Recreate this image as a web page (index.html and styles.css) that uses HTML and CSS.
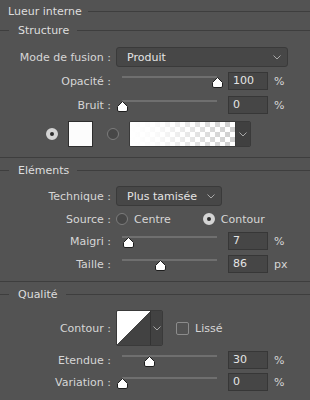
FILE: index.html
```html
<!DOCTYPE html>
<html lang="fr">
<head>
    <meta charset="UTF-8">
    <title>Lueur interne</title>
    <link rel="stylesheet" href="styles.css">
</head>
<body>
    <div class="panel">
        <!-- Title -->
        <div class="title">
            <span>Lueur interne</span>
            <i class="rule"></i>
        </div>

        <!-- Structure -->
        <section class="group first">
            <div class="legend"><i class="rule lead"></i><span>Structure</span><i class="rule"></i></div>

            <div class="row r-mode">
                <label class="lbl">Mode de fusion :</label>
                <div class="select wide">
                    <span>Produit</span>
                    <svg class="chev" width="8" height="5" viewBox="0 0 8 5"><path d="M0.5 0.5 L4 4 L7.5 0.5" fill="none" stroke="#a8a8a8" stroke-width="1"/></svg>
                </div>
            </div>

            <div class="row r-slider g5">
                <label class="lbl">Opacité :</label>
                <div class="slider">
                    <div class="track"></div>
                    <svg class="thumb" style="left: 101px" width="11" height="11" viewBox="0 0 11 11"><path d="M5.5 0.5 L10.5 5.5 L10.5 9 Q10.5 10.5 9 10.5 L2 10.5 Q0.5 10.5 0.5 9 L0.5 5.5 Z" fill="#fff" stroke="#1e1e1e"/></svg>
                </div>
                <div class="num">100</div>
                <span class="unit">%</span>
            </div>

            <div class="row r-slider g6">
                <label class="lbl">Bruit :</label>
                <div class="slider">
                    <div class="track"></div>
                    <svg class="thumb" style="left: 6px" width="11" height="11" viewBox="0 0 11 11"><path d="M5.5 0.5 L10.5 5.5 L10.5 9 Q10.5 10.5 9 10.5 L2 10.5 Q0.5 10.5 0.5 9 L0.5 5.5 Z" fill="#fff" stroke="#1e1e1e"/></svg>
                </div>
                <div class="num">0</div>
                <span class="unit">%</span>
            </div>

            <div class="row r-color">
                <span class="radio on"></span>
                <div class="swatch"></div>
                <span class="radio"></span>
                <div class="gradient">
                    <div class="grad-fill"></div>
                    <div class="grad-btn">
                        <svg width="8" height="5" viewBox="0 0 8 5"><path d="M0.5 0.5 L4 4 L7.5 0.5" fill="none" stroke="#a8a8a8" stroke-width="1"/></svg>
                    </div>
                </div>
            </div>
        </section>

        <!-- Eléments -->
        <section class="group second">
            <div class="legend"><i class="rule lead"></i><span>Eléments</span><i class="rule"></i></div>

            <div class="row r-tech">
                <label class="lbl">Technique :</label>
                <div class="select">
                    <span>Plus tamisée</span>
                    <svg class="chev" width="8" height="5" viewBox="0 0 8 5"><path d="M0.5 0.5 L4 4 L7.5 0.5" fill="none" stroke="#a8a8a8" stroke-width="1"/></svg>
                </div>
            </div>

            <div class="row r-source">
                <label class="lbl">Source :</label>
                <span class="radio"></span>
                <span class="opt">Centre</span>
                <span class="radio on spaced"></span>
                <span class="opt">Contour</span>
            </div>

            <div class="row r-slider g4">
                <label class="lbl">Maigri :</label>
                <div class="slider">
                    <div class="track"></div>
                    <svg class="thumb" style="left: 12px" width="11" height="11" viewBox="0 0 11 11"><path d="M5.5 0.5 L10.5 5.5 L10.5 9 Q10.5 10.5 9 10.5 L2 10.5 Q0.5 10.5 0.5 9 L0.5 5.5 Z" fill="#fff" stroke="#1e1e1e"/></svg>
                </div>
                <div class="num">7</div>
                <span class="unit">%</span>
            </div>

            <div class="row r-slider g5">
                <label class="lbl">Taille :</label>
                <div class="slider">
                    <div class="track"></div>
                    <svg class="thumb" style="left: 44px" width="11" height="11" viewBox="0 0 11 11"><path d="M5.5 0.5 L10.5 5.5 L10.5 9 Q10.5 10.5 9 10.5 L2 10.5 Q0.5 10.5 0.5 9 L0.5 5.5 Z" fill="#fff" stroke="#1e1e1e"/></svg>
                </div>
                <div class="num">86</div>
                <span class="unit">px</span>
            </div>
        </section>

        <!-- Qualité -->
        <section class="group third">
            <div class="legend"><i class="rule lead"></i><span>Qualité</span><i class="rule"></i></div>

            <div class="row r-contour">
                <label class="lbl">Contour :</label>
                <div class="curve">
                    <div class="curve-fill"></div>
                    <div class="curve-btn">
                        <svg width="8" height="5" viewBox="0 0 8 5"><path d="M0.5 0.5 L4 4 L7.5 0.5" fill="none" stroke="#a8a8a8" stroke-width="1"/></svg>
                    </div>
                </div>
                <span class="check"></span>
                <span class="opt">Lissé</span>
            </div>

            <div class="row r-slider g5">
                <label class="lbl">Etendue :</label>
                <div class="slider">
                    <div class="track"></div>
                    <svg class="thumb" style="left: 33px" width="11" height="11" viewBox="0 0 11 11"><path d="M5.5 0.5 L10.5 5.5 L10.5 9 Q10.5 10.5 9 10.5 L2 10.5 Q0.5 10.5 0.5 9 L0.5 5.5 Z" fill="#fff" stroke="#1e1e1e"/></svg>
                </div>
                <div class="num">30</div>
                <span class="unit">%</span>
            </div>

            <div class="row r-slider g4">
                <label class="lbl">Variation :</label>
                <div class="slider">
                    <div class="track"></div>
                    <svg class="thumb" style="left: 6px" width="11" height="11" viewBox="0 0 11 11"><path d="M5.5 0.5 L10.5 5.5 L10.5 9 Q10.5 10.5 9 10.5 L2 10.5 Q0.5 10.5 0.5 9 L0.5 5.5 Z" fill="#fff" stroke="#1e1e1e"/></svg>
                </div>
                <div class="num">0</div>
                <span class="unit">%</span>
            </div>
        </section>
    </div>
</body>
</html>
```

FILE: styles.css
```css
/* Base */
body {
    margin: 0;
    background: #535353;
    font-family: "DejaVu Sans", "Liberation Sans", sans-serif;
    font-size: 11px;
    color: #d6d6d6;
}

.panel {
    width: 310px;
    height: 400px;
    overflow: hidden;
}

/* Title and legends */
.title {
    display: flex;
    align-items: center;
    height: 22px;
    padding-left: 8px;
    color: #dedede;
}

.title .rule {
    margin-left: 6px;
}

.rule {
    flex: 1;
    height: 1px;
    background: #3e3e3e;
}

.rule.lead {
    flex: 0 0 9px;
    margin-right: 9px;
}

.legend {
    display: flex;
    align-items: center;
    height: 17px;
    color: #dedede;
}

.legend span {
    margin-right: 8px;
}

/* Groups */
.group {
    border-bottom: 1px solid #3e3e3e;
}

.group.first {
    padding-bottom: 10px;
}

.group.second {
    margin-top: 4px;
    padding-bottom: 8px;
}

.group.third {
    margin-top: 4px;
    border-bottom: none;
}

/* Rows */
.row {
    display: flex;
    align-items: center;
}

.lbl {
    width: 111px;
    text-align: right;
    flex-shrink: 0;
    margin-right: 5px;
    white-space: nowrap;
}

.r-mode {
    margin-top: 8px;
    height: 20px;
}

.r-slider {
    height: 18px;
}

.g4 { margin-top: 4px; }
.g5 { margin-top: 5px; }
.g6 { margin-top: 6px; }

/* Dropdowns */
.select {
    display: flex;
    align-items: center;
    justify-content: space-between;
    box-sizing: border-box;
    height: 20px;
    width: 106px;
    padding: 0 6px 0 10px;
    background: #474747;
    border: 1px solid #3a3a3a;
    border-radius: 3px;
    color: #e4e4e4;
}

.select.wide {
    width: 172px;
}

/* Sliders */
.slider {
    position: relative;
    width: 107px;
    height: 18px;
    flex-shrink: 0;
}

.track {
    position: absolute;
    top: 4px;
    left: 6px;
    right: 6px;
    height: 2px;
    background: #6f6f6f;
}

.thumb {
    position: absolute;
    top: 5px;
    margin-left: -5px;
}

.num {
    box-sizing: border-box;
    width: 40px;
    height: 18px;
    margin-left: 5px;
    padding-left: 4px;
    line-height: 16px;
    background: #464646;
    border: 1px solid #373737;
    color: #e4e4e4;
}

.unit {
    margin-left: 6px;
}

/* Radios */
.radio {
    box-sizing: border-box;
    width: 12px;
    height: 12px;
    border-radius: 50%;
    border: 1px solid #7c7c7c;
    background: #474747;
    flex-shrink: 0;
}

.radio.on {
    border: 4px solid #d4d4d4;
    background: #2c2c2c;
}

/* Colour row */
.r-color {
    margin-top: 7px;
    height: 26px;
    padding-left: 46px;
}

.swatch {
    box-sizing: border-box;
    width: 25px;
    height: 26px;
    margin-left: 10px;
    margin-right: 14px;
    background: #fcfcfc;
    border: 1px solid #2e2e2e;
}

.gradient {
    display: flex;
    box-sizing: border-box;
    width: 122px;
    height: 26px;
    margin-left: 10px;
    border: 1px solid #3a3a3a;
    border-radius: 2px;
    overflow: hidden;
}

.grad-fill {
    flex: 1;
    background:
        linear-gradient(to right, #fff 0%, rgba(255, 255, 255, 0.9) 25%, rgba(255, 255, 255, 0) 100%),
        conic-gradient(#cdcdcd 25%, #fff 0 50%, #cdcdcd 0 75%, #fff 0) 0 0 / 10px 10px;
}

.grad-btn {
    width: 14px;
    display: flex;
    align-items: center;
    justify-content: center;
    background: #404040;
    border-left: 1px solid #3a3a3a;
}

/* Eléments rows */
.r-tech {
    margin-top: 7px;
    height: 20px;
}

.r-source {
    margin-top: 4px;
    height: 18px;
}

.opt {
    margin-left: 6px;
}

.radio.spaced {
    margin-left: 32px;
}

/* Contour row */
.r-contour {
    margin-top: 7px;
    height: 36px;
}

.curve {
    display: flex;
    box-sizing: border-box;
    width: 47px;
    height: 36px;
    border: 1px solid #3a3a3a;
    border-radius: 2px;
    overflow: hidden;
}

.curve-fill {
    flex: 1;
    background: linear-gradient(to bottom right, #fff 50%, #424242 50%);
}

.curve-btn {
    width: 11px;
    display: flex;
    align-items: center;
    justify-content: center;
    background: #424242;
    border-left: 1px solid #333;
}

.check {
    box-sizing: border-box;
    width: 13px;
    height: 13px;
    margin-left: 13px;
    border: 1px solid #8c8c8c;
    border-radius: 2px;
}
```
